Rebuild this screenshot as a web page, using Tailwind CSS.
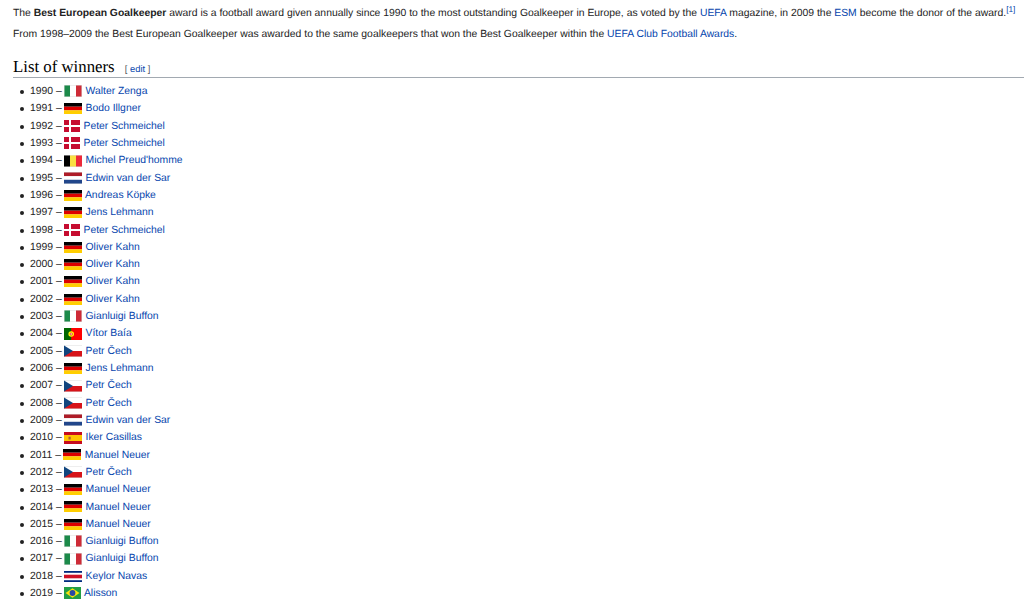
<!DOCTYPE html>
<html lang="en">
<head>
  <meta charset="UTF-8" />
  <title>Best European Goalkeeper</title>
  <script src="https://cdn.jsdelivr.net/npm/@tailwindcss/browser@4"></script>
</head>
<body class="bg-white text-[#222] font-['Liberation_Sans',Arial,sans-serif] text-[10.38px] [text-rendering:geometricPrecision] overflow-hidden">

  <svg class="hidden">
    <symbol id="it" viewBox="0 0 18 12"><rect width="18" height="12" fill="#ddd"/><rect x=".5" y=".5" width="5.5" height="11" fill="#1c8a4a"/><rect x="6" y=".5" width="6" height="11" fill="#fff"/><rect x="12" y=".5" width="5.5" height="11" fill="#ce2b37"/></symbol>
    <symbol id="de" viewBox="0 0 18 11"><rect width="18" height="3.7" fill="#000"/><rect y="3.7" width="18" height="3.7" fill="#d00"/><rect y="7.3" width="18" height="3.7" fill="#ffce00"/></symbol>
    <symbol id="dk" viewBox="0 0 16 12"><rect width="16" height="12" fill="#c60c30"/><rect x="5" width="2" height="12" fill="#fff"/><rect y="5" width="16" height="2" fill="#fff"/></symbol>
    <symbol id="be" viewBox="0 0 18 12"><rect width="18" height="12" fill="#ddd"/><rect y=".5" width="6" height="11" fill="#000"/><rect x="6" y=".5" width="6" height="11" fill="#fae042"/><rect x="12" y=".5" width="6" height="11" fill="#ed2939"/></symbol>
    <symbol id="nl" viewBox="0 0 18 12"><rect width="18" height="12" fill="#ddd"/><rect y=".5" width="18" height="3.7" fill="#ae1c28"/><rect y="4.2" width="18" height="3.6" fill="#fff"/><rect y="7.8" width="18" height="3.7" fill="#21468b"/></symbol>
    <symbol id="pt" viewBox="0 0 18 12"><rect width="18" height="12" fill="#f00"/><rect width="7.2" height="12" fill="#060"/><circle cx="7.2" cy="6" r="2.8" fill="#ff0"/><circle cx="7.2" cy="6" r="1.6" fill="#e33"/><circle cx="7.2" cy="6" r=".7" fill="#fff"/></symbol>
    <symbol id="cz" viewBox="0 0 18 12"><rect width="18" height="12" fill="#ddd"/><rect y=".5" width="18" height="5.5" fill="#fff"/><rect y="6" width="18" height="5.5" fill="#d7141a"/><path d="M0 .5 9 6 0 11.5z" fill="#11457e"/></symbol>
    <symbol id="es" viewBox="0 0 18 12"><rect width="18" height="12" fill="#c60b1e"/><rect y="3" width="18" height="6" fill="#ffc400"/><rect x="4.5" y="4.7" width="2.2" height="2.8" fill="#ad5b3a"/></symbol>
    <symbol id="cr" viewBox="0 0 18 11"><rect width="18" height="11" fill="#002b7f"/><rect y="1.8" width="18" height="7.4" fill="#fff"/><rect y="3.7" width="18" height="3.6" fill="#ce1126"/></symbol>
    <symbol id="br" viewBox="0 0 17 12"><rect width="17" height="12" fill="#229e45"/><path d="M8.5 1.3 15.5 6 8.5 10.7 1.5 6z" fill="#f8e509"/><circle cx="8.5" cy="6" r="2.9" fill="#2b49a3"/></symbol>
  </svg>

  <main class="px-[13px]">
    <p class="pt-[5px] leading-[17px] h-[22px] whitespace-nowrap">The <b>Best European Goalkeeper</b> award is a football award given annually since 1990 to the most outstanding Goalkeeper in Europe, as voted by the <a class="text-[#0645ad]">UEFA</a> magazine, in 2009 the <a class="text-[#0645ad]">ESM</a> become the donor of the award.<sup class="text-[#0645ad] text-[8.3px] leading-none">[1]</sup></p>
    <p class="mt-[4px] leading-[17px] whitespace-nowrap">From 1998–2009 the Best European Goalkeeper was awarded to the same goalkeepers that won the Best Goalkeeper within the <a class="text-[#0645ad]">UEFA Club Football Awards</a>.</p>

    <h2 class="mt-[13px] -mr-[13px] h-[22px] border-b border-[#a2a9b1] font-['Liberation_Serif',serif] text-[16.8px] leading-[21px] text-black">List of winners <span class="ml-[6px] font-['Liberation_Sans',sans-serif] text-[9.4px] text-[#54595d]">[ <a class="text-[#0645ad]">edit</a> ]</span></h2>

    <ul class="mt-[5px] ml-[17px] list-none leading-[17.31px] [&_svg]:mr-[1px] [&>li]:relative [&>li]:before:absolute [&>li]:before:content-[''] [&>li]:before:left-[-10px] [&>li]:before:top-[7px] [&>li]:before:size-[4px] [&>li]:before:rounded-full [&>li]:before:bg-[#222]">
      <li>1990 – <svg class="inline w-[18px] h-[12px] ml-[-1px]"><use href="#it"/></svg> <a class="text-[#0645ad]">Walter Zenga</a></li>
      <li>1991 – <svg class="inline w-[18px] h-[11px] ml-[-1px]"><use href="#de"/></svg> <a class="text-[#0645ad]">Bodo Illgner</a></li>
      <li>1992 – <svg class="inline w-[16px] h-[12px] ml-[-1px]"><use href="#dk"/></svg> <a class="text-[#0645ad]">Peter Schmeichel</a></li>
      <li>1993 – <svg class="inline w-[16px] h-[12px] ml-[-1px]"><use href="#dk"/></svg> <a class="text-[#0645ad]">Peter Schmeichel</a></li>
      <li>1994 – <svg class="inline w-[18px] h-[12px] ml-[-1px]"><use href="#be"/></svg> <a class="text-[#0645ad]">Michel Preud'homme</a></li>
      <li>1995 – <svg class="inline w-[18px] h-[12px] ml-[-1px]"><use href="#nl"/></svg> <a class="text-[#0645ad]">Edwin van der Sar</a></li>
      <li>1996 – <svg class="inline w-[18px] h-[11px] ml-[-1px]"><use href="#de"/></svg> <a class="text-[#0645ad]">Andreas Köpke</a></li>
      <li>1997 – <svg class="inline w-[18px] h-[11px] ml-[-1px]"><use href="#de"/></svg> <a class="text-[#0645ad]">Jens Lehmann</a></li>
      <li>1998 – <svg class="inline w-[16px] h-[12px] ml-[-1px]"><use href="#dk"/></svg> <a class="text-[#0645ad]">Peter Schmeichel</a></li>
      <li>1999 – <svg class="inline w-[18px] h-[11px] ml-[-1px]"><use href="#de"/></svg> <a class="text-[#0645ad]">Oliver Kahn</a></li>
      <li>2000 – <svg class="inline w-[18px] h-[11px] ml-[-1px]"><use href="#de"/></svg> <a class="text-[#0645ad]">Oliver Kahn</a></li>
      <li>2001 – <svg class="inline w-[18px] h-[11px] ml-[-1px]"><use href="#de"/></svg> <a class="text-[#0645ad]">Oliver Kahn</a></li>
      <li>2002 – <svg class="inline w-[18px] h-[11px] ml-[-1px]"><use href="#de"/></svg> <a class="text-[#0645ad]">Oliver Kahn</a></li>
      <li>2003 – <svg class="inline w-[18px] h-[12px] ml-[-1px]"><use href="#it"/></svg> <a class="text-[#0645ad]">Gianluigi Buffon</a></li>
      <li>2004 – <svg class="inline w-[18px] h-[12px] ml-[-1px]"><use href="#pt"/></svg> <a class="text-[#0645ad]">Vítor Baía</a></li>
      <li>2005 – <svg class="inline w-[18px] h-[12px] ml-[-1px]"><use href="#cz"/></svg> <a class="text-[#0645ad]">Petr Čech</a></li>
      <li>2006 – <svg class="inline w-[18px] h-[11px] ml-[-1px]"><use href="#de"/></svg> <a class="text-[#0645ad]">Jens Lehmann</a></li>
      <li>2007 – <svg class="inline w-[18px] h-[12px] ml-[-1px]"><use href="#cz"/></svg> <a class="text-[#0645ad]">Petr Čech</a></li>
      <li>2008 – <svg class="inline w-[18px] h-[12px] ml-[-1px]"><use href="#cz"/></svg> <a class="text-[#0645ad]">Petr Čech</a></li>
      <li>2009 – <svg class="inline w-[18px] h-[12px] ml-[-1px]"><use href="#nl"/></svg> <a class="text-[#0645ad]">Edwin van der Sar</a></li>
      <li>2010 – <svg class="inline w-[18px] h-[12px] ml-[-1px]"><use href="#es"/></svg> <a class="text-[#0645ad]">Iker Casillas</a></li>
      <li>2011 – <svg class="inline w-[18px] h-[11px] ml-[-1px]"><use href="#de"/></svg> <a class="text-[#0645ad]">Manuel Neuer</a></li>
      <li>2012 – <svg class="inline w-[18px] h-[12px] ml-[-1px]"><use href="#cz"/></svg> <a class="text-[#0645ad]">Petr Čech</a></li>
      <li>2013 – <svg class="inline w-[18px] h-[11px] ml-[-1px]"><use href="#de"/></svg> <a class="text-[#0645ad]">Manuel Neuer</a></li>
      <li>2014 – <svg class="inline w-[18px] h-[11px] ml-[-1px]"><use href="#de"/></svg> <a class="text-[#0645ad]">Manuel Neuer</a></li>
      <li>2015 – <svg class="inline w-[18px] h-[11px] ml-[-1px]"><use href="#de"/></svg> <a class="text-[#0645ad]">Manuel Neuer</a></li>
      <li>2016 – <svg class="inline w-[18px] h-[12px] ml-[-1px]"><use href="#it"/></svg> <a class="text-[#0645ad]">Gianluigi Buffon</a></li>
      <li>2017 – <svg class="inline w-[18px] h-[12px] ml-[-1px]"><use href="#it"/></svg> <a class="text-[#0645ad]">Gianluigi Buffon</a></li>
      <li>2018 – <svg class="inline w-[18px] h-[11px] ml-[-1px]"><use href="#cr"/></svg> <a class="text-[#0645ad]">Keylor Navas</a></li>
      <li>2019 – <svg class="inline w-[17px] h-[12px] ml-[-1px]"><use href="#br"/></svg> <a class="text-[#0645ad]">Alisson</a></li>
    </ul>
  </main>
</body>
</html>
